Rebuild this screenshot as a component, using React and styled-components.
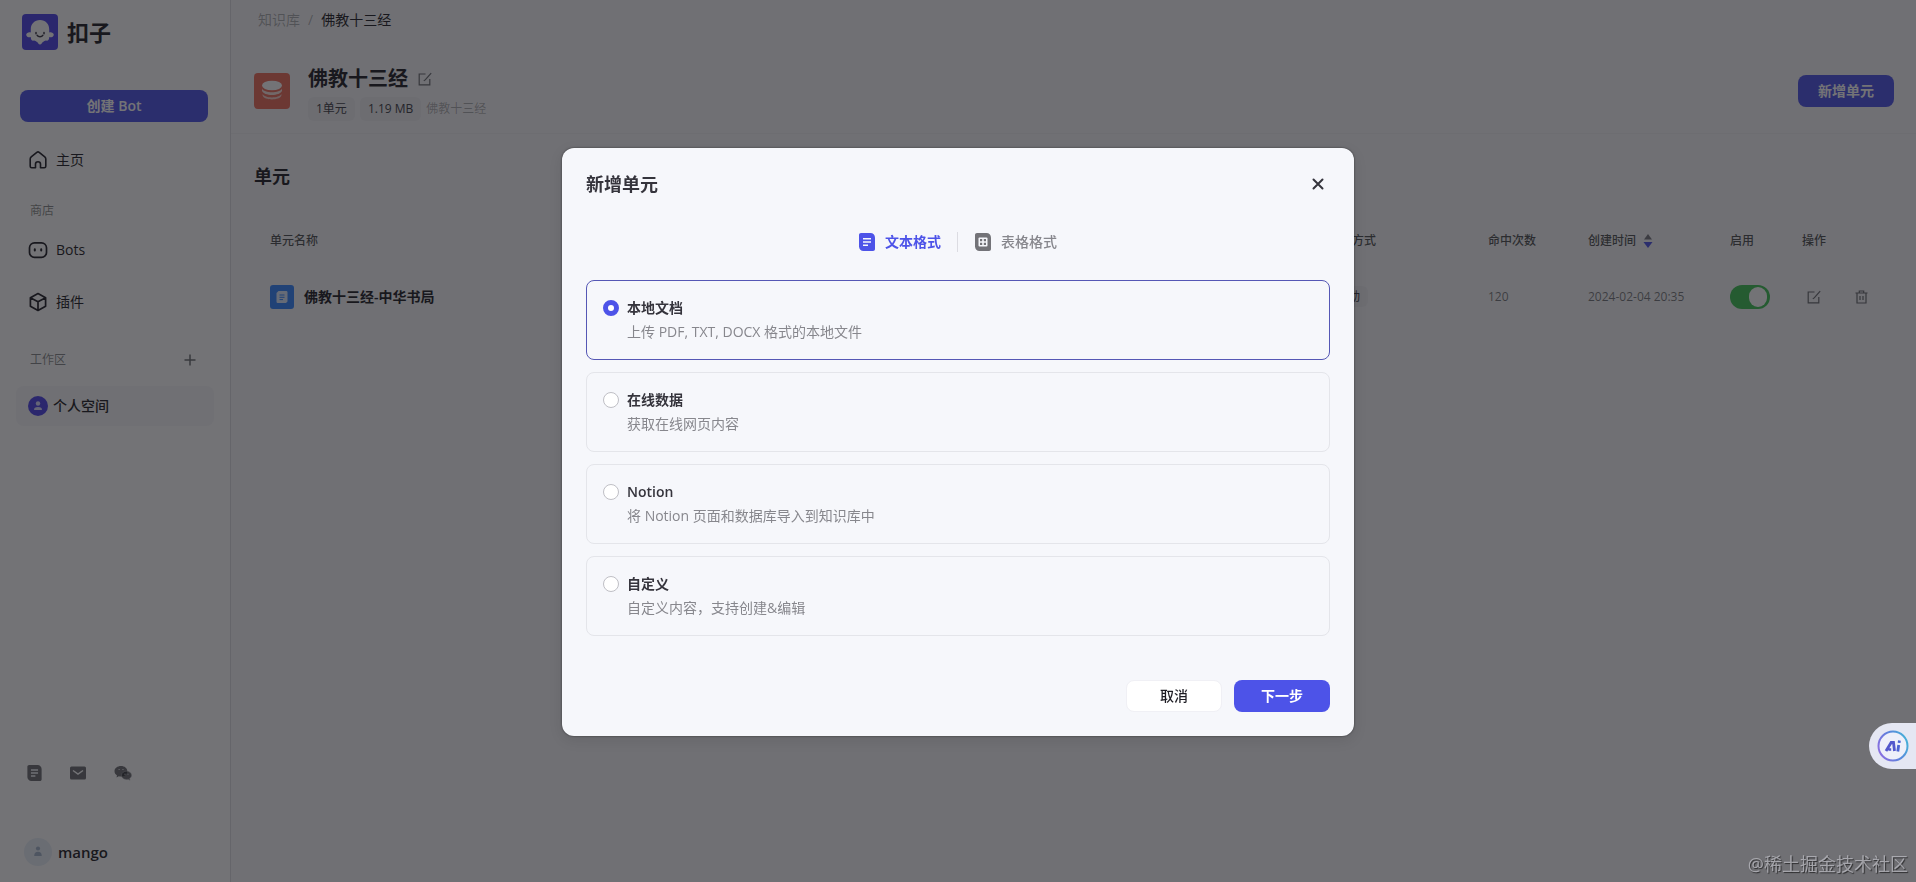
import React, { useState } from 'react';
import styled, { createGlobalStyle } from 'styled-components';

const GlobalStyle = createGlobalStyle`
  * {
    box-sizing: border-box;
  }
  body {
    margin: 0;
    color: #1d1c23;
    background: #f7f7fa;
    font-family: "Open Sans", "Noto Sans CJK SC", sans-serif;
    font-size: 14px;
    line-height: 20px;
  }
  button, input {
    font: inherit;
  }
`;

const Layout = styled.div`
  display: flex;
  min-height: 100vh;
`;

const Sidebar = styled.aside`
  display: flex;
  flex-direction: column;
  flex: 0 0 231px;
  padding: 14px 16px 16px;
  background: #fff;
  border-right: 1px solid #dcdce2;
`;

const Brand = styled.div`
  display: flex;
  align-items: center;
  gap: 9px;
  padding-left: 6px;
  font-size: 22px;
  font-weight: 700;
  line-height: 36px;
`;

const Button = styled.button`
  height: 32px;
  width: ${props => props.$wide ? 'auto' : '96px'};
  margin: ${props => props.$wide ? '40px 6px 18px 4px' : '0'};
  padding: 0;
  border: ${props => props.$light ? '1px solid #f0f0f5' : '0'};
  border-radius: 8px;
  background: ${props => props.$light ? '#fff' : '#4d53e8'};
  color: ${props => props.$light ? '#1d1c23' : '#fff'};
  font-weight: ${props => props.$light ? 500 : 600};
  cursor: pointer;
`;

const NavLink = styled.a`
  display: flex;
  align-items: center;
  gap: ${props => props.$active ? '5px' : '8px'};
  height: 40px;
  margin-bottom: 12px;
  padding: 0 12px;
  border-radius: 8px;
  background: ${props => props.$active ? '#f7f7f9' : 'transparent'};
  color: inherit;
  font-weight: ${props => props.$active ? 500 : 400};
  text-decoration: none;
`;

const NavGroup = styled.div`
  display: flex;
  align-items: center;
  justify-content: space-between;
  height: 20px;
  margin: ${props => props.$spaced ? '16px 0' : '9px 0'};
  padding: 0 17px 0 14px;
  color: rgba(28, 31, 35, .55);
  font-size: 12px;
`;

const IconButton = styled.button`
  display: flex;
  padding: 0;
  border: 0;
  background: none;
  color: rgba(28, 31, 35, .65);
  cursor: pointer;
`;

const SideFooter = styled.div`
  margin-top: auto;
  padding: 0 8px;
`;

const Socials = styled.div`
  display: flex;
  align-items: center;
  gap: 27px;
  margin-bottom: 56px;
  padding-left: 3px;
`;

const Profile = styled.div`
  display: flex;
  align-items: center;
  gap: 6px;
  font-size: 15px;
  font-weight: 600;
`;

const Main = styled.main`
  flex: 1;
  min-width: 0;
`;

const Header = styled.header`
  height: 134px;
  padding: 10px 22px 0 23px;
  border-bottom: 1px solid #f0f0f3;
`;

const Crumbs = styled.nav`
  display: flex;
  gap: 8px;
  padding-left: 4px;
  span, a {
    color: rgba(28, 31, 35, .35);
    text-decoration: none;
  }
`;

const TitleBar = styled.div`
  display: flex;
  align-items: center;
  gap: 18px;
  margin-top: 31px;
`;

const TitleText = styled.div`
  flex: 1;
  padding-top: 4px;
`;

const TitleLine = styled.div`
  display: flex;
  align-items: center;
  gap: 10px;
`;

const Title = styled.h1`
  margin: 0;
  font-size: 20px;
  font-weight: 600;
  line-height: 28px;
`;

const Tags = styled.div`
  display: flex;
  align-items: center;
  gap: 5px;
  margin-top: 4px;
  color: rgba(28, 31, 35, .35);
  font-size: 12px;
`;

const Tag = styled.span`
  padding: 2px 8px;
  border-radius: 6px;
  background: #efeff3;
  color: #3d3c44;
  font-size: 12px;
`;

const Units = styled.section`
  padding: 28px 22px 0 23px;
`;

const SectionTitle = styled.h2`
  margin: 0 0 29px;
  font-size: 18px;
  font-weight: 600;
  line-height: 28px;
`;

const Table = styled.table`
  width: 100%;
  border-collapse: collapse;
  table-layout: fixed;
  th, td {
    padding: 0 0 0 16px;
    text-align: left;
  }
  th {
    height: 44px;
    color: rgba(28, 31, 35, .8);
    font-size: 12px;
    font-weight: 500;
  }
  td {
    height: 68px;
    color: rgba(28, 31, 35, .6);
    font-size: 12px;
  }
`;

const CellRow = styled.div`
  display: flex;
  align-items: center;
  gap: ${props => props.$gap};
  padding-left: ${props => props.$inset || '0'};
`;

const UnitName = styled.span`
  color: #1d1c23;
  font-size: 14px;
  font-weight: 600;
`;

const Toggle = styled.input`
  display: block;
  appearance: none;
  width: 40px;
  height: 24px;
  margin: 0;
  border-radius: 12px;
  background: ${props => props.checked ? '#3ec254' : '#c6c6cd'};
  &:before {
    content: "";
    display: block;
    width: 18px;
    height: 20px;
    margin: 2px 0 0 ${props => props.checked ? '19px' : '2px'};
    border-radius: 10px;
    background: #fff;
  }
`;

const Mask = styled.div`
  position: fixed;
  inset: 0;
  display: flex;
  align-items: center;
  justify-content: center;
  background: rgba(22, 22, 26, .6);
`;

const Dialog = styled.div`
  display: flex;
  flex-direction: column;
  width: 792px;
  max-width: 90vw;
  margin-bottom: -2px;
  padding: 24px;
  border-radius: 12px;
  background: #f6f7fb;
  box-shadow: 0 0 2px rgba(0, 0, 0, .6), 0 4px 14px rgba(0, 0, 0, .1);
`;

const DialogHead = styled.div`
  display: flex;
  align-items: center;
  justify-content: space-between;
  padding-right: 6px;
`;

const DialogTitle = styled.h3`
  margin: 0;
  color: #35343c;
  font-size: 18px;
  font-weight: 600;
  line-height: 24px;
`;

const Tabs = styled.div`
  display: flex;
  align-items: center;
  justify-content: center;
  margin: 36px 0 28px;
`;

const Tab = styled.button`
  display: flex;
  align-items: center;
  gap: 10px;
  padding: 0 16px;
  border: 0;
  background: none;
  color: ${props => props.$active ? '#4d53e8' : '#87878d'};
  font-weight: ${props => props.$active ? 600 : 500};
  cursor: pointer;
  & + & {
    padding-left: 17px;
    border-left: 1px solid #dcdce2;
  }
`;

const Options = styled.div`
  display: grid;
  gap: 12px;
`;

const Option = styled.label`
  display: grid;
  grid-template-columns: 16px 1fr;
  column-gap: 8px;
  row-gap: 4px;
  align-content: start;
  align-items: center;
  height: 80px;
  padding: 17px 16px;
  border: 1px solid ${props => props.$checked ? '#5557b5' : '#e4e5ea'};
  border-radius: 8px;
  cursor: pointer;
`;

const Radio = styled.input`
  appearance: none;
  width: 16px;
  height: 16px;
  margin: 0;
  border: 1px solid #bfbfc5;
  border-radius: 50%;
  background: #fff;
  &:checked {
    border: 5px solid #4d53e8;
  }
`;

const OptionTitle = styled.span`
  color: #35343c;
  font-weight: 600;
`;

const OptionText = styled.span`
  grid-column: 2;
  color: #87878d;
`;

const DialogFoot = styled.div`
  display: flex;
  justify-content: flex-end;
  gap: 12px;
  margin-top: 44px;
`;

const Assistant = styled.button`
  position: fixed;
  right: 0;
  bottom: 113px;
  display: flex;
  align-items: center;
  width: 47px;
  height: 46px;
  padding: 0 0 0 8px;
  border: 0;
  border-radius: 23px 0 0 23px;
  background: #e5e7f3;
`;

const Watermark = styled.div`
  position: fixed;
  right: 8px;
  bottom: 5px;
  color: rgba(190, 190, 196, .75);
  font-size: 18px;
  line-height: 26px;
  text-shadow: 1px 1px 1px rgba(0, 0, 0, .6);
`;

const Logo = () => (
  <svg width="36" height="36" viewBox="0 0 36 36">
    <rect width="36" height="36" rx="4" fill="#4d43e8" />
    <path d="M18 6C12.500 6 8.800 10 8.800 15.200V18.500C7.500 17.600 4.200 18.500 4.200 20.700C4.200 22.600 6.500 23.600 9 23.200C8.500 25 9.500 27 12 26.600C13 26.500 14 27.500 15 28C16 28.500 16.500 30.500 18 30.500S20 28.500 21 28C22 27.500 23 26.500 24 26.600C26.500 27 27.500 25 27 23.200C29.500 23.600 31.800 22.600 31.800 20.700C31.800 18.500 28.500 17.600 27.200 18.500V15.200C27.200 10 23.500 6 18 6z" fill="#fff" />
    <path d="M14 18.500v1.200M22 18.500v1.200M15.200 21.300c1.200 1.900 4.400 1.900 5.600 0" fill="none" stroke="#35333f" strokeWidth="1.500" strokeLinecap="round" />
  </svg>
);

const HomeIcon = () => (
  <svg width="20" height="20" viewBox="0 0 20 20" fill="none" stroke="currentColor" strokeWidth="1.600" strokeLinejoin="round">
    <path d="M2.200 9c0-1 .3-1.600 1-2.200L8.800 2.300c.8-.6 1.600-.6 2.400 0l5.600 4.500c.7.600 1 1.200 1 2.200v7.200c0 .9-.6 1.500-1.500 1.500h-3.800V14c0-1.500-1-2.300-2.500-2.300S7.500 12.500 7.500 14v3.700H3.700c-.9 0-1.500-.6-1.500-1.500z" />
  </svg>
);

const BotIcon = () => (
  <svg width="20" height="20" viewBox="0 0 20 20" fill="none" stroke="currentColor">
    <rect x="1.500" y="2.800" width="17" height="14.600" rx="5" strokeWidth="1.700" />
    <path d="M6.800 9.200v1.400M13.200 9.200v1.400" strokeWidth="2" strokeLinecap="round" />
  </svg>
);

const CubeIcon = () => (
  <svg width="20" height="20" viewBox="0 0 20 20" fill="none" stroke="currentColor" strokeWidth="1.700" strokeLinejoin="round">
    <path d="m10 1.500 7.600 4.200v8.600L10 18.500l-7.600-4.200V5.700zM2.400 5.700l7.600 4.100 7.600-4.100M10 9.800v8.700" />
  </svg>
);

const PlusIcon = () => (
  <svg width="14" height="14" viewBox="0 0 14 14" stroke="currentColor" strokeWidth="1.500">
    <path d="M7 1.500v11M1.500 7h11" />
  </svg>
);

const UserAvatar = ({ size, bg, color, r = 2.2 }) => (
  <svg width={size} height={size} viewBox="0 0 20 20">
    <circle cx="10" cy="10" r="10" fill={bg} />
    <circle cx="10" cy="7.500" r={r} fill={color} />
    <path d={`M${10 - r * 1.8} ${10.5 + r * 1.6}c0-2.200 1-3 ${r * 1.8}-3s${r * 1.8} .8 ${r * 1.8} 3z`} fill={color} />
  </svg>
);

const DocIcon = ({ width = 16, height = 18 }) => (
  <svg width={width} height={height} viewBox="0 0 16 18">
    <path d="M0 2C0 .8.800 0 2 0h9.500C14 0 16 2 16 4.500V16c0 1.200-.8 2-2 2H4.500C2 18 0 16 0 13.500z" fill="currentColor" />
    <path d="M4 5.700h8M4 9h8M4 12.300h5" stroke="#f6f7fb" strokeWidth="1.600" />
  </svg>
);

const SheetIcon = () => (
  <svg width="16" height="18" viewBox="0 0 16 18">
    <path d="M0 2C0 .8.800 0 2 0h9.500C14 0 16 2 16 4.500V16c0 1.200-.8 2-2 2H4.500C2 18 0 16 0 13.500z" fill="#737378" />
    <rect x="3.500" y="4.500" width="9" height="9" rx="1" fill="#f6f7fb" />
    <path d="M5 6h2.200v2.200H5zM8.800 6H11v2.200H8.800zM5 9.800h2.200V12H5zM8.800 9.800H11V12H8.800z" fill="#737378" />
  </svg>
);

const MailIcon = () => (
  <svg width="18" height="18" viewBox="0 0 18 18">
    <rect x="1" y="2.500" width="16" height="13" rx="1.500" fill="currentColor" />
    <path d="m4 6.500 5 3.500 5-3.500" fill="none" stroke="#fff" strokeWidth="1.500" />
  </svg>
);

const WechatIcon = () => (
  <svg width="18" height="18" viewBox="0 0 18 18">
    <path d="M7 2C3.500 2 .5 4.200.5 7.200c0 1.800 1 3.200 2.500 4.200l-.5 2 2.300-1.200c.7.200 1.400.3 2.200.3 3.500 0 6.300-2.300 6.300-5.300S10.500 2 7 2z" fill="currentColor" />
    <path d="M12.500 7.200c-2.800 0-5 1.800-5 4.100s2.200 4.200 5 4.200c.6 0 1.200-.1 1.700-.3l1.800 1-.4-1.700c1.200-.7 1.900-1.900 1.900-3.200 0-2.300-2.200-4.100-5-4.100z" fill="currentColor" stroke="#b0b0b4" strokeWidth=".5" />
    <path d="M4.500 5.500h1.300M8.300 5.500h1.300M10.500 10.200h1M13.500 10.200h1" stroke="#d0d0d4" strokeWidth="1.100" />
  </svg>
);

const StackIcon = () => (
  <svg width="36" height="36" viewBox="0 0 36 36">
    <rect width="36" height="36" rx="4" fill="#ee6b58" />
    <ellipse cx="18" cy="12.500" rx="10" ry="4.800" fill="#fff" />
    <path d="M8 15.500c2 5 18 5 20 0v2.300c-1.500 5.600-18.500 5.600-20 0z" fill="#fbe3dd" />
    <path d="M8.600 21c2.200 4.500 16.600 4.500 18.800 0v1.600c-1.600 5.200-17.200 5.200-18.800 0z" fill="#f8cfc7" />
  </svg>
);

const EditIcon = () => (
  <svg width="14" height="14" viewBox="0 0 14 14" fill="none" stroke="currentColor" strokeWidth="1.200">
    <path d="M7.500 2H1.200v10.800h10.600V7M5.800 8.700l1.400-.8 6-6.700" />
  </svg>
);

const TrashIcon = () => (
  <svg width="13" height="14" viewBox="0 0 13 14" fill="none" stroke="currentColor" strokeWidth="1.200">
    <path d="M.5 3h12M4.300 3V1h4.400v2M2 3v10h9V3M5 6v4M8 6v4" />
  </svg>
);

const FileIcon = () => (
  <svg width="24" height="24" viewBox="0 0 24 24">
    <rect width="24" height="24" rx="3" fill="#3385ff" />
    <path d="M6.500 8 8.500 6H16c1 0 1.500.5 1.500 1.500v9L16 18H8c-1 0-1.500-.5-1.500-1.500z" fill="#dfeaff" />
    <path d="M9.500 10h5M9.500 12.300h5M9.500 14.600h3.500" stroke="#3385ff" />
  </svg>
);

const SortIcon = () => (
  <svg width="10" height="14" viewBox="0 0 10 14">
    <path d="M5 0l4 5.500H1z" fill="#77777d" />
    <path d="M5 14l4.500-6h-9z" fill="#4d53e8" />
  </svg>
);

const CloseIcon = () => (
  <svg width="12" height="12" viewBox="0 0 12 12" stroke="#35343c" strokeWidth="2" strokeLinecap="round">
    <path d="m1.500 1.500 9 9M10.500 1.500l-9 9" />
  </svg>
);

const AiIcon = () => (
  <svg width="32" height="32" viewBox="0 0 32 32" fill="none">
    <defs>
      <linearGradient id="ring" x1="0" y1=".7" x2="1" y2=".3">
        <stop offset="0" stopColor="#8a6fe0" />
        <stop offset=".5" stopColor="#5f80dc" />
        <stop offset="1" stopColor="#46b0d8" />
      </linearGradient>
    </defs>
    <circle cx="16" cy="16" r="14.500" fill="#eef0fa" stroke="url(#ring)" strokeWidth="2" />
    <path d="m9 21 5.200-8.500h2.300l1 8.500M12.800 18.300v2.400" stroke="#5257cc" strokeWidth="2.800" />
    <path d="m20.800 21.500.9-6.500M22.100 12.900l.3-2.400" stroke="#4b62d2" strokeWidth="2.800" />
  </svg>
);

const options = [
  { id: 'local', title: '本地文档', text: '上传 PDF, TXT, DOCX 格式的本地文件' },
  { id: 'online', title: '在线数据', text: '获取在线网页内容' },
  { id: 'notion', title: 'Notion', text: '将 Notion 页面和数据库导入到知识库中' },
  { id: 'custom', title: '自定义', text: '自定义内容，支持创建&编辑' },
];

const SideMenu = () => (
  <Sidebar>
    <Brand><Logo />扣子</Brand>
    <Button $wide>创建 Bot</Button>
    <NavLink href="#home"><HomeIcon />主页</NavLink>
    <NavGroup>商店</NavGroup>
    <NavLink href="#bots"><BotIcon />Bots</NavLink>
    <NavLink href="#plugins"><CubeIcon />插件</NavLink>
    <NavGroup $spaced>
      工作区
      <IconButton aria-label="新建工作区"><PlusIcon /></IconButton>
    </NavGroup>
    <NavLink href="#space" $active><UserAvatar size={20} bg="#4d43e8" color="#dcdcff" />个人空间</NavLink>
    <SideFooter>
      <Socials>
        <IconButton aria-label="文档"><DocIcon width={15} height={16} /></IconButton>
        <IconButton aria-label="邮件"><MailIcon /></IconButton>
        <IconButton aria-label="微信"><WechatIcon /></IconButton>
      </Socials>
      <Profile><UserAvatar size={28} bg="#e9f0f8" color="#a3b5ca" r={1.5} />mango</Profile>
    </SideFooter>
  </Sidebar>
);

const UnitTable = () => {
  const [enabled, setEnabled] = useState(true);

  return (
    <Table>
      <colgroup>
        <col />
        <col style={{ width: 160 }} />
        <col style={{ width: 100 }} />
        <col style={{ width: 142 }} />
        <col style={{ width: 72 }} />
        <col style={{ width: 108 }} />
      </colgroup>
      <thead>
        <tr>
          <th>单元名称</th>
          <th>更新方式</th>
          <th>命中次数</th>
          <th><CellRow $gap="7px">创建时间 <SortIcon /></CellRow></th>
          <th>启用</th>
          <th>操作</th>
        </tr>
      </thead>
      <tbody>
        <tr>
          <td><CellRow $gap="10px"><FileIcon /><UnitName>佛教十三经-中华书局</UnitName></CellRow></td>
          <td><Tag>手动</Tag></td>
          <td>120</td>
          <td>2024-02-04 20:35</td>
          <td>
            <Toggle type="checkbox" aria-label="启用" checked={enabled} onChange={e => setEnabled(e.target.checked)} />
          </td>
          <td>
            <CellRow $gap="34px" $inset="5px">
              <IconButton aria-label="编辑"><EditIcon /></IconButton>
              <IconButton aria-label="删除"><TrashIcon /></IconButton>
            </CellRow>
          </td>
        </tr>
      </tbody>
    </Table>
  );
};

const NewUnitDialog = () => {
  const [selected, setSelected] = useState('local');

  return (
    <Mask>
      <Dialog role="dialog" aria-labelledby="dialog-title">
        <DialogHead>
          <DialogTitle id="dialog-title">新增单元</DialogTitle>
          <IconButton aria-label="关闭"><CloseIcon /></IconButton>
        </DialogHead>
        <Tabs>
          <Tab $active><DocIcon />文本格式</Tab>
          <Tab><SheetIcon />表格格式</Tab>
        </Tabs>
        <Options>
          {options.map(({ id, title, text }) => (
            <Option key={id} $checked={selected === id}>
              <Radio type="radio" name="source" checked={selected === id} onChange={() => setSelected(id)} />
              <OptionTitle>{title}</OptionTitle>
              <OptionText>{text}</OptionText>
            </Option>
          ))}
        </Options>
        <DialogFoot>
          <Button $light>取消</Button>
          <Button>下一步</Button>
        </DialogFoot>
      </Dialog>
    </Mask>
  );
};

const App = () => (
  <React.Fragment>
    <GlobalStyle />
    <Layout>
      <SideMenu />
      <Main>
        <Header>
          <Crumbs>
            <a href="#knowledge">知识库</a>
            <span>/</span>
            佛教十三经
          </Crumbs>
          <TitleBar>
            <StackIcon />
            <TitleText>
              <TitleLine>
                <Title>佛教十三经</Title>
                <IconButton aria-label="编辑名称"><EditIcon /></IconButton>
              </TitleLine>
              <Tags>
                <Tag>1单元</Tag>
                <Tag>1.19 MB</Tag>
                佛教十三经
              </Tags>
            </TitleText>
            <Button>新增单元</Button>
          </TitleBar>
        </Header>
        <Units>
          <SectionTitle>单元</SectionTitle>
          <UnitTable />
        </Units>
      </Main>
    </Layout>
    <NewUnitDialog />
    <Assistant aria-label="AI"><AiIcon /></Assistant>
    <Watermark>@稀土掘金技术社区</Watermark>
  </React.Fragment>
);

export default App;
